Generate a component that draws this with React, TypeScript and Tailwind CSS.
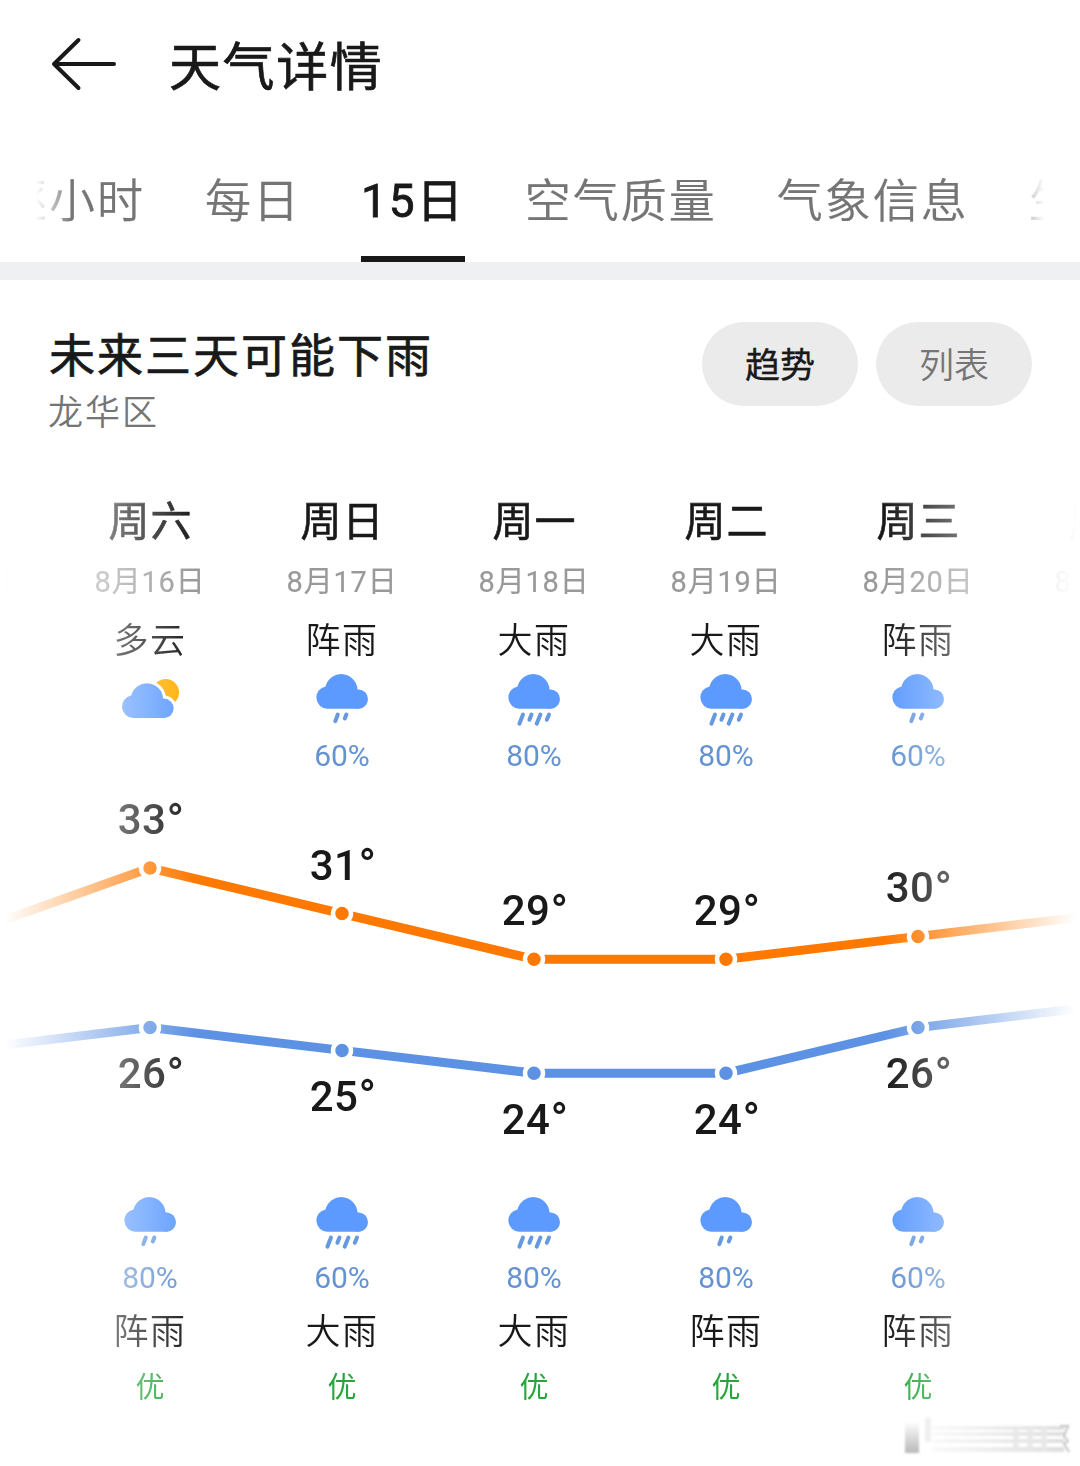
import React from 'react';

type Sky = 'partly' | 'shower' | 'heavy';

interface Period {
  sky: Sky;
  label: string;
  chance?: string;
}

interface Day {
  week: string;
  date: string;
  day: Period;
  night: Period;
  high: number;
  low: number;
}

const shower = (chance: string): Period => ({ sky: 'shower', label: '阵雨', chance });
const heavy = (chance: string): Period => ({ sky: 'heavy', label: '大雨', chance });

const days: Day[] = [
  { week: '周五', date: '8月15日', day: { sky: 'partly', label: '多云' }, night: shower('60%'), high: 30, low: 25 },
  { week: '周六', date: '8月16日', day: { sky: 'partly', label: '多云' }, night: shower('80%'), high: 33, low: 26 },
  { week: '周日', date: '8月17日', day: shower('60%'), night: heavy('60%'), high: 31, low: 25 },
  { week: '周一', date: '8月18日', day: heavy('80%'), night: heavy('80%'), high: 29, low: 24 },
  { week: '周二', date: '8月19日', day: heavy('80%'), night: shower('80%'), high: 29, low: 24 },
  { week: '周三', date: '8月20日', day: shower('60%'), night: shower('60%'), high: 30, low: 26 },
  { week: '周四', date: '8月21日', day: shower('60%'), night: shower('60%'), high: 31, low: 27 },
];

const CLOUD =
  'M11.3 35.3A11.3 11.3 0 0 1 9.6 12.9A16.2 16.2 0 0 1 41.5 16A9.7 9.7 0 0 1 42.3 35.3Z';

const drops: Record<'shower' | 'heavy', string> = {
  shower: 'M21.8 41L19.3 47.6M30.4 41L28.8 45',
  heavy: 'M15 41L11.4 50.2M23.5 41L21.4 46.3M32.4 41L28.7 50.2M41 41L38.8 46.3',
};

function Cloud() {
  return (
    <>
      <path d={CLOUD} fill="#5c9aff" />
      <circle cx="42.3" cy="25.6" r="9.7" fill="#5c9aff" />
    </>
  );
}

function WeatherIcon({ sky }: { sky: Sky }) {
  return (
    <svg viewBox="0 0 64 54" className="h-[54px] w-16" fill="none">
      {sky === 'partly' ? (
        <>
          <circle cx="47.7" cy="19.4" r="13.3" fill="#ffae00" />
          <g transform="translate(3.6 9.7)">
            <path d={CLOUD} stroke="#fff" strokeWidth="6" />
            <circle cx="42.3" cy="25.6" r="9.7" stroke="#fff" strokeWidth="6" />
            <Cloud />
          </g>
        </>
      ) : (
        <g transform="translate(6 0.5)">
          <Cloud />
          <path d={drops[sky]} stroke="#6699df" strokeWidth="4" strokeLinecap="round" />
        </g>
      )}
    </svg>
  );
}

const COL = 192;
const STEP = 22.8;
const colX = (i: number) => COL / 2 + i * COL;
const tempY = (t: number) => 100 + (33 - t) * STEP;

function Series({ values, color, labelOffset }: { values: number[]; color: string; labelOffset: number }) {
  return (
    <g>
      <polyline
        points={values.map((v, i) => `${colX(i)},${tempY(v)}`).join(' ')}
        fill="none"
        stroke={color}
        strokeWidth="9"
      />
      {values.map((v, i) => (
        <g key={i}>
          <circle cx={colX(i)} cy={tempY(v)} r="9" fill={color} stroke="#fff" strokeWidth="4.5" />
          <text
            x={colX(i) + 0.5}
            y={tempY(v) + labelOffset}
            textAnchor="middle"
            className="fill-[#191919] text-[42px] font-medium tracking-[0.4px]"
          >
            {v}
            <tspan dy="1.5" className="text-[46px] tracking-[-0.8px]">
              °
            </tspan>
          </text>
        </g>
      ))}
    </g>
  );
}

function TrendChart() {
  return (
    <svg viewBox="0 0 1344 420" className="h-[420px] w-[1344px]">
      <Series values={days.map((d) => d.high)} color="#ff7800" labelOffset={-34} />
      <Series values={days.map((d) => d.low)} color="#5c91e3" labelOffset={60.5} />
    </svg>
  );
}

const tabs = ['逐小时', '每日', '15日', '空气质量', '气象信息', '生活指数'];

export default function App() {
  return (
    <div className="relative flex h-[1466px] w-[1080px] flex-col overflow-hidden bg-white font-['Roboto','Noto_Sans_CJK_SC',sans-serif] text-[#191919]">
      <header className="flex h-[132px] items-center pl-[50px]">
        <svg viewBox="0 0 68 56" className="mt-[-4px] h-14 w-[68px]" fill="none" stroke="#191919" strokeWidth="4" strokeLinecap="round" strokeLinejoin="round">
          <path d="M28.5 4L4 28L28.5 52M4 28H64" />
        </svg>
        <h1 className="mt-[5px] ml-[51px] text-[52px] leading-[60px] tracking-[1.6px] [-webkit-text-stroke:0.7px]">天气详情</h1>
      </header>

      <nav className="mx-9 h-[130px] overflow-hidden [mask-image:linear-gradient(to_right,transparent,black_36px,black_972px,transparent)]">
        <div className="ml-[-35px] flex h-full w-max gap-[60px] text-[46px] leading-[60px] tracking-[2px]">
          {tabs.map((t) => (
            <button
              key={t}
              className={
                t === '15日'
                  ? 'h-full border-b-[6px] border-[#191919] pt-[36px] pb-[22px] [-webkit-text-stroke:0.8px]'
                  : 'h-full border-b-[6px] border-transparent pt-[36px] pb-[22px] font-[350] text-[#757575] [-webkit-text-stroke:0.2px]'
              }
            >
              {t}
            </button>
          ))}
        </div>
      </nav>
      <div className="h-[18px] shrink-0 bg-[#eff0f2]" />

      <section className="flex h-[208px] shrink-0 items-start justify-between pt-[42px] pr-12 pl-12">
        <div>
          <h2 className="mt-[4px] ml-px text-[46px] leading-[60px] tracking-[2px] [-webkit-text-stroke:0.7px]">未来三天可能下雨</h2>
          <p className="mt-[4px] text-[35px] leading-[48px] font-[350] tracking-[2px] text-[#757575]">龙华区</p>
        </div>
        <div className="flex gap-[18px] text-[35px]">
          <button className="h-[84px] w-[156px] rounded-full bg-[#ebebeb] pt-[6px] [-webkit-text-stroke:0.4px]">趋势</button>
          <button className="h-[84px] w-[156px] rounded-full bg-[#ebebeb] pt-[6px] font-[350] text-[#757575]">列表</button>
        </div>
      </section>

      <section className="shrink-0 overflow-hidden [mask-image:linear-gradient(to_right,transparent_4px,black_196px,black_884px,transparent_1076px)]">
        <div className="ml-[-138px] w-[1344px]">
          <div className="grid h-[280px] grid-cols-7">
            {days.map((d) => (
              <div key={d.date} className="flex flex-col items-center whitespace-nowrap">
                <div className="mt-[9px] pl-px text-[41px] leading-[50px] tracking-[1px] [-webkit-text-stroke:0.6px]">{d.week}</div>
                <div className="mt-[15px] text-[29px] leading-[40px] tracking-[0.8px] text-[#999999] [-webkit-text-stroke:0.2px]">{d.date}</div>
                <div className="mt-[18px] text-[35px] leading-[44px] font-[350] tracking-[1.5px]">{d.day.label}</div>
                <div className="mt-[9px]">
                  <WeatherIcon sky={d.day.sky} />
                </div>
                {d.day.chance && <div className="mt-[9px] text-[30px] leading-[40px] text-[#6493d2]">{d.day.chance}</div>}
              </div>
            ))}
          </div>
          <TrendChart />
          <div className="grid h-[240px] grid-cols-7">
            {days.map((d) => (
              <div key={d.date} className="flex flex-col items-center whitespace-nowrap">
                <div className="mt-[8px]">
                  <WeatherIcon sky={d.night.sky} />
                </div>
                <div className="mt-[8px] text-[30px] leading-[40px] text-[#6493d2]">{d.night.chance}</div>
                <div className="mt-[13px] text-[35px] leading-[44px] font-[350] tracking-[1.5px]">{d.night.label}</div>
                <div className="mt-[13px] text-[29px] leading-[40px] text-[#27a63c]">优</div>
              </div>
            ))}
          </div>
        </div>
      </section>

      <svg viewBox="0 0 180 44" className="absolute right-1 bottom-2 h-11 w-[180px] blur-[1.2px]" fill="none">
        <defs>
          <linearGradient id="smear" x1="0" y1="0" x2="0" y2="1">
            <stop offset="0" stopColor="#fff" />
            <stop offset="1" stopColor="#b8b8b8" />
          </linearGradient>
          <linearGradient id="streak" x1="0" y1="0" x2="1" y2="0">
            <stop offset="0" stopColor="#fafafa" />
            <stop offset="1" stopColor="#dedede" />
          </linearGradient>
        </defs>
        <rect x="9" y="8" width="14" height="31" fill="url(#smear)" />
        <rect x="29" y="4" width="6" height="24" fill="#f0f0f0" />
        <rect x="36" y="12" width="132" height="4" fill="url(#streak)" />
        <rect x="36" y="18" width="132" height="4" fill="url(#streak)" />
        <rect x="36" y="25" width="132" height="4" fill="url(#streak)" />
        <rect x="36" y="33" width="132" height="5" fill="url(#streak)" />
        <path d="M120 12V38M134 12V38M148 12V38" stroke="#e8e8e8" strokeWidth="5" />
        <path d="M164 12H172L168 22L172 27L168 30L173 38" stroke="#c4c4c4" strokeWidth="2" />
      </svg>
    </div>
  );
}
